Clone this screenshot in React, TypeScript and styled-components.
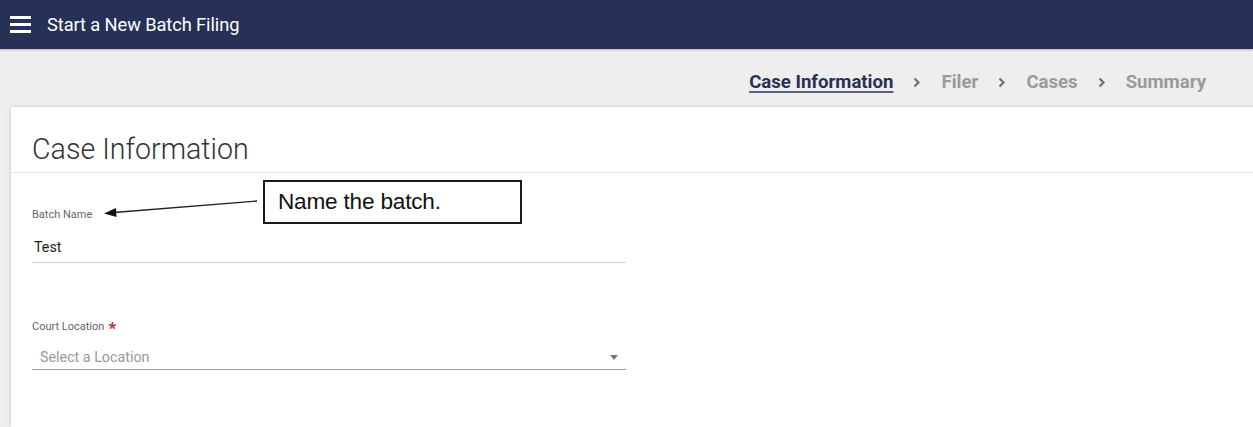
import React from "react";
import styled, { createGlobalStyle } from "styled-components";

const Global = createGlobalStyle`
  html, body { margin: 0; padding: 0; background: #eeeeee; }
  body { font-family: Roboto, "Noto Sans", Arial, sans-serif; overflow: hidden; }
  * { box-sizing: border-box; }
`;

const Page = styled.div`
  position: relative;
  width: 1253px;
  height: 427px;
  background: #eeeeee;
  overflow: hidden;
`;

const TopBar = styled.header`
  height: 49px;
  background: #273157;
  display: flex;
  align-items: center;
  padding-left: 10px;
  gap: 16px;
  box-shadow: 0 1px 2px rgba(0, 0, 0, 0.25);
`;

const Burger = styled.div`
  width: 21px;
  display: flex;
  flex-direction: column;
  gap: 4px;
  span {
    display: block;
    height: 3px;
    background: #ffffff;
  }
`;

const TopTitle = styled.h1`
  margin: 0;
  font-size: 18.3px;
  font-weight: 400;
  color: #ffffff;
  letter-spacing: -0.1px;
`;

const Steps = styled.nav`
  height: 58px;
  display: flex;
  justify-content: flex-end;
  align-items: center;
  padding: 7px 47px 0 0;
`;

const Step = styled.span<{ $active?: boolean }>`
  font-size: 18.6px;
  font-weight: 700;
  color: ${(p) => (p.$active ? "#273157" : "#9a9a9a")};
  text-decoration: ${(p) => (p.$active ? "underline" : "none")};
  text-underline-offset: 3px;
  text-decoration-thickness: 2px;
  text-decoration-color: #5a6080;
`;

const Chevron = styled.span`
  width: 48px;
  display: flex;
  justify-content: center;
  padding-top: 1px;
`;

const Card = styled.section`
  margin-left: 11px;
  background: #ffffff;
  height: 320px;
  box-shadow: 0 0 4px rgba(0, 0, 0, 0.18);
`;

const CardHead = styled.div`
  height: 66px;
  display: flex;
  align-items: center;
  padding: 18px 0 0 21px;
  border-bottom: 1px solid #e2e2e2;
`;

const CardTitle = styled.h2`
  margin: 0;
  font-size: 28.6px;
  font-weight: 300;
  color: #333333;
`;

const Form = styled.div`
  width: 615px;
  padding: 35px 0 0 21px;
  display: flex;
  flex-direction: column;
`;

const Field = styled.div<{ $gap: number }>`
  display: flex;
  flex-direction: column;
  margin-bottom: ${(p) => p.$gap}px;
`;

const Label = styled.label`
  font-size: 11px;
  color: #666666;
  line-height: 14px;
  display: flex;
  align-items: center;
  gap: 4px;
`;

const Req = styled.span`
  color: #c0283c;
  font-size: 17px;
  line-height: 10px;
  font-weight: 700;
  position: relative;
  top: 1px;
`;

const Input = styled.div<{ $color: string; $line: string; $h: number; $bottom: number }>`
  height: ${(p) => p.$h}px;
  display: flex;
  align-items: flex-end;
  justify-content: space-between;
  padding: 0 8px ${(p) => p.$bottom}px ${(p) => (p.$color === "#999999" ? "8px" : "2px")};
  font-size: 14.3px;
  color: ${(p) => p.$color};
  border-bottom: 1px solid ${(p) => p.$line};
`;

const Caret = styled.span`
  width: 0;
  height: 0;
  border-left: 4px solid transparent;
  border-right: 4px solid transparent;
  border-top: 5px solid #777777;
  margin-bottom: 5px;
`;

const Callout = styled.div`
  position: absolute;
  left: 263px;
  top: 180px;
  width: 259px;
  height: 44px;
  border: 2px solid #1a1a1a;
  background: #ffffff;
  font-family: "Liberation Sans", Arial, sans-serif;
  font-size: 22.6px;
  color: #111111;
  display: flex;
  align-items: center;
  padding-left: 13px;
  letter-spacing: -0.2px;
`;

const Arrow = styled.svg`
  position: absolute;
  left: 100px;
  top: 195px;
`;

function Chev() {
  return (
    <Chevron>
      <svg width="8" height="11" viewBox="0 0 8 11">
        <path d="M1.5 1.5 L5.5 5.5 L1.5 9.5" stroke="#707070" strokeWidth="2.2" fill="none" />
      </svg>
    </Chevron>
  );
}

export default function App() {
  return (
    <Page>
      <Global />
      <TopBar>
        <Burger>
          <span />
          <span />
          <span />
        </Burger>
        <TopTitle>Start a New Batch Filing</TopTitle>
      </TopBar>
      <Steps>
        <Step $active>Case Information</Step>
        <Chev />
        <Step>Filer</Step>
        <Chev />
        <Step>Cases</Step>
        <Chev />
        <Step>Summary</Step>
      </Steps>
      <Card>
        <CardHead>
          <CardTitle>Case Information</CardTitle>
        </CardHead>
        <Form>
          <Field $gap={57}>
            <Label>Batch Name</Label>
            <Input $color="#222222" $line="#d0d0d0" $h={41} $bottom={7}>
              Test
            </Input>
          </Field>
          <Field $gap={0}>
            <Label>
              Court Location <Req>*</Req>
            </Label>
            <Input $color="#999999" $line="#9a9a9a" $h={36} $bottom={4}>
              Select a Location
              <Caret />
            </Input>
          </Field>
        </Form>
      </Card>
      <Arrow width="165" height="25" viewBox="0 0 165 25">
        <line x1="157" y1="6" x2="14" y2="17.5" stroke="#222" strokeWidth="1.3" />
        <polygon points="4,18.5 16,13 16.5,22" fill="#111" />
      </Arrow>
      <Callout>Name the batch.</Callout>
    </Page>
  );
}
